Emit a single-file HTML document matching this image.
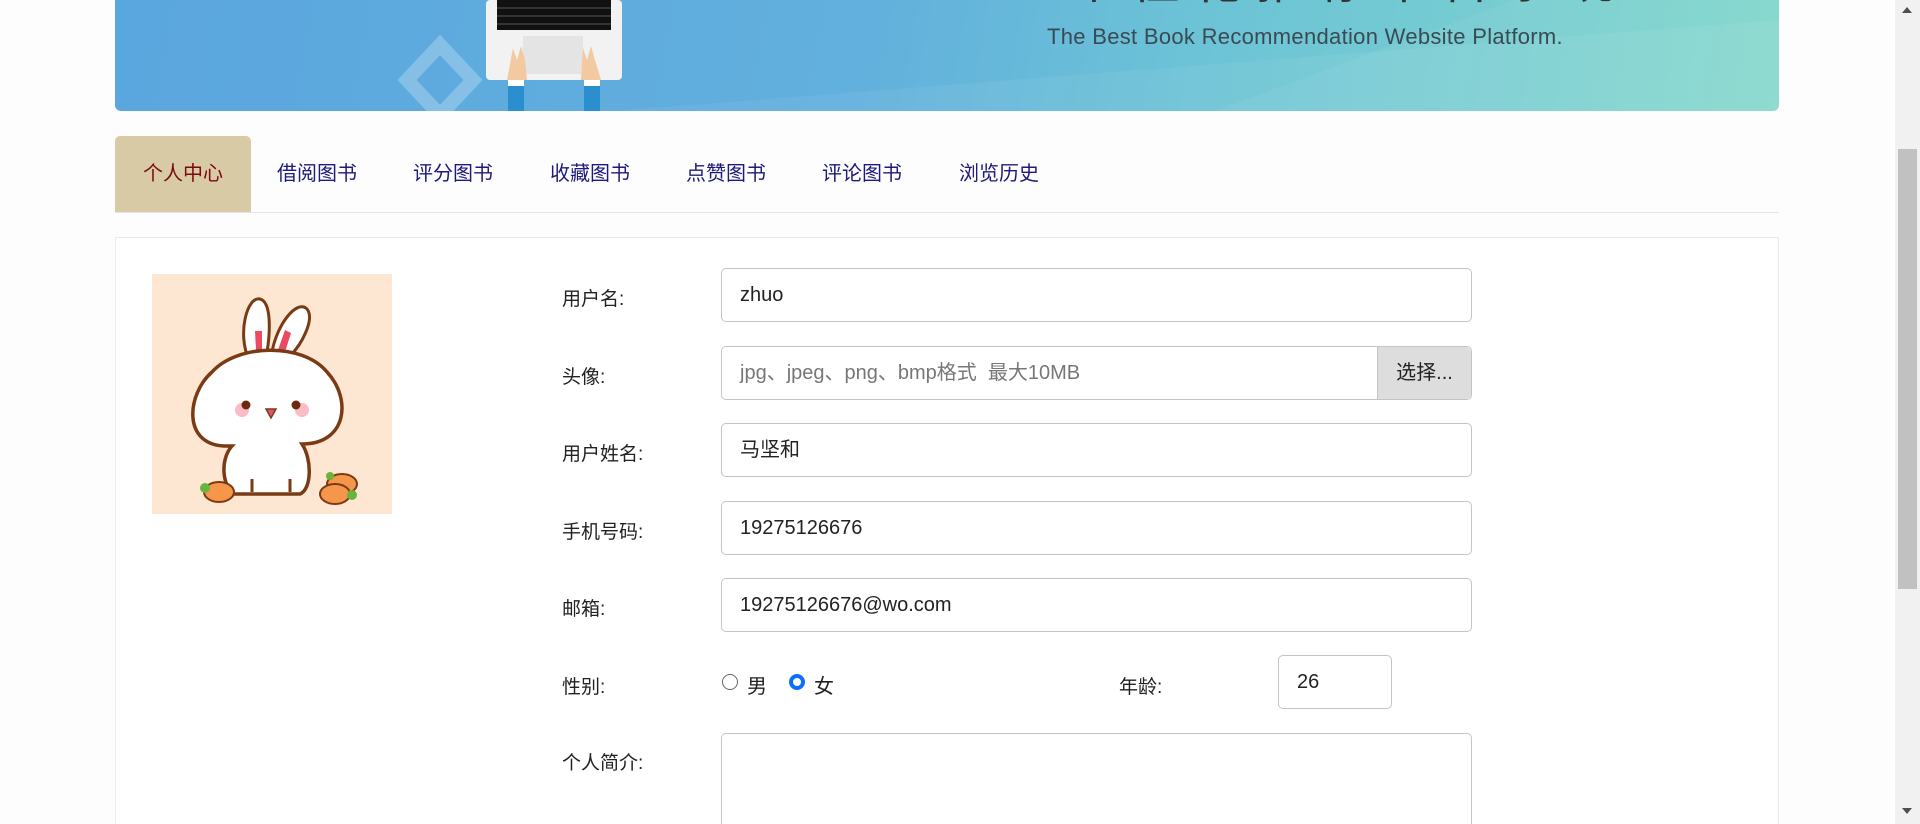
<!DOCTYPE html>
<html style="width:1920px;height:824px;overflow:hidden"><head><meta charset="utf-8"><style>
*{box-sizing:border-box;margin:0;padding:0}
body{width:1920px;height:824px;overflow:hidden;background:#fdfdfe;font-family:"Liberation Sans","Noto Sans CJK SC",sans-serif;position:relative}
.banner{position:absolute;left:115px;top:0;width:1664px;height:111px;border-radius:0 0 6px 6px;background:linear-gradient(100deg,#5aa6de 0%,#62b0dd 45%,#6cc3d6 65%,#82d7cc 100%);overflow:hidden}
.sub{position:absolute;left:932px;top:24px;font-size:22px;color:#3a4a55;font-weight:300;letter-spacing:0.3px}
.ttl{position:absolute;left:955px;top:-58px;font-size:48px;color:#333;letter-spacing:14px;font-family:"Noto Sans CJK SC",sans-serif}
.tabs{position:absolute;left:115px;top:136px;width:1664px;height:77px;border-bottom:1px solid #e6e6e6}
.tab{position:absolute;top:0;height:76px;line-height:76px;font-size:20px;color:#1d1a7a}
.tab.act{background:#d9caa6;color:#7a0a10;border-radius:5px 5px 0 0;left:0;width:136px;text-align:center}
.panel{position:absolute;left:115px;top:237px;width:1664px;height:600px;background:#fff;border:1px solid #eaeaea}
.lab{position:absolute;left:562px;font-size:19px;color:#222}
.inp{position:absolute;left:721px;width:751px;height:54px;border:1px solid #c4c4c4;border-radius:5px;background:#fff;font-size:20px;color:#222;padding-left:18px;line-height:52px}
.btn{position:absolute;right:0;top:0;width:94px;height:52px;background:#ddd;border-left:1px solid #c4c4c4;text-align:center;border-radius:0 5px 5px 0;color:#222}
.radio{position:absolute;width:16px;height:16px;border-radius:50%;border:1px solid #666;background:#fff}
.sb{position:absolute;right:0;top:0;width:25px;height:824px;background:#f1f1f1}
</style></head><body>
<div class="banner">
<svg width="1664" height="111" style="position:absolute;left:0;top:0">
<polygon points="500,111 1664,20 1664,111" fill="#fff" opacity="0.06"/>
<polygon points="1100,111 1400,0 1664,0 1664,111" fill="#fff" opacity="0.05"/>
<polygon points="292,80 325,45 358,80 325,115" fill="none" stroke="#fff" stroke-opacity="0.25" stroke-width="14"/>
<rect x="371" y="0" width="136" height="80" rx="4" fill="#f2f2f2"/>
<rect x="382" y="0" width="114" height="30" fill="#111"/>
<g stroke="#555" stroke-width="1"><line x1="382" y1="8" x2="496" y2="8"/><line x1="382" y1="16" x2="496" y2="16"/><line x1="382" y1="24" x2="496" y2="24"/></g>
<rect x="408" y="36" width="60" height="38" fill="#e4e4e4"/>
<rect x="393" y="84" width="16" height="27" fill="#2b8fcf"/><rect x="469" y="84" width="16" height="27" fill="#2b8fcf"/>
<rect x="393" y="80" width="16" height="6" fill="#fff"/><rect x="469" y="80" width="16" height="6" fill="#fff"/>
<path d="M392 80 L398 48 L402 60 L406 46 L410 60 L412 80Z" fill="#f2c9a0"/>
<path d="M466 80 L468 48 L472 60 L476 46 L480 60 L486 80Z" fill="#f2c9a0"/>
</svg>
<div class="ttl">个性化推荐平台系统</div>
<div class="sub">The Best Book Recommendation Website Platform.</div>
</div>
<div class="tabs">
<div class="tab act">个人中心</div>
<div class="tab" style="left:162px">借阅图书</div>
<div class="tab" style="left:298px">评分图书</div>
<div class="tab" style="left:435px">收藏图书</div>
<div class="tab" style="left:571px">点赞图书</div>
<div class="tab" style="left:707px">评论图书</div>
<div class="tab" style="left:844px">浏览历史</div>
</div>
<div class="panel"></div>
<svg style="position:absolute;left:152px;top:274px" width="240" height="240" viewBox="0 0 240 240">
<rect width="240" height="240" fill="#fde7d2"/>
<path d="M97 86 C85 60 95 22 108 25 C120 28 118 60 115 78Z" fill="#fff" stroke="#7a3a14" stroke-width="3"/>
<path d="M120 78 C125 50 145 25 155 35 C163 45 150 70 138 82Z" fill="#fff" stroke="#7a3a14" stroke-width="3"/>
<path d="M104 76 L103 57 L110 57 L110 76Z M126 76 L133 56 L139 59 L133 78Z" fill="#ea4b62"/>
<path d="M72 172 C30 170 35 120 60 98 C85 70 150 68 175 98 C200 125 195 170 150 170 C160 185 160 215 148 220 L82 220 C70 212 68 185 80 172Z" fill="#fff" stroke="#7a3a14" stroke-width="3.5"/>
<circle cx="90" cy="136" r="7" fill="#fbbcc6"/><circle cx="150" cy="136" r="7" fill="#fbbcc6"/>
<circle cx="94" cy="131" r="4.5" fill="#6b2a10"/><circle cx="144" cy="131" r="4.5" fill="#6b2a10"/>
<path d="M114 135 L124 135 L119 144Z" fill="#e4536a" stroke="#7a3a14" stroke-width="1.5"/>
<path d="M100 205 L100 218 M138 205 L138 218" stroke="#7a3a14" stroke-width="3"/>
<ellipse cx="67" cy="218" rx="15" ry="10" fill="#f5964a" stroke="#7a3a14" stroke-width="2"/>
<circle cx="53" cy="214" r="5" fill="#69b43c"/>
<ellipse cx="190" cy="210" rx="15" ry="10" fill="#f5964a" stroke="#7a3a14" stroke-width="2"/>
<ellipse cx="183" cy="220" rx="15" ry="10" fill="#f5964a" stroke="#7a3a14" stroke-width="2"/>
<circle cx="200" cy="221" r="5" fill="#69b43c"/><circle cx="178" cy="202" r="4" fill="#69b43c"/>
</svg>
<div class="lab" style="top:284px">用户名:</div>
<div class="inp" style="top:268px">zhuo</div>
<div class="lab" style="top:362px">头像:</div>
<div class="inp" style="top:346px;color:#777">jpg、jpeg、png、bmp格式 &nbsp;最大10MB<div class="btn">选择...</div></div>
<div class="lab" style="top:439px">用户姓名:</div>
<div class="inp" style="top:423px">马坚和</div>
<div class="lab" style="top:517px">手机号码:</div>
<div class="inp" style="top:501px">19275126676</div>
<div class="lab" style="top:594px">邮箱:</div>
<div class="inp" style="top:578px">19275126676@wo.com</div>
<div class="lab" style="top:672px">性别:</div>
<div class="radio" style="left:722px;top:674px"></div>
<div class="lab" style="left:747px;top:670px;font-size:20px">男</div>
<div class="radio" style="left:789px;top:674px;border:4px solid #0d6efd"></div>
<div class="lab" style="left:814px;top:670px;font-size:20px">女</div>
<div class="lab" style="left:1119px;top:672px">年龄:</div>
<div class="inp" style="left:1278px;top:655px;width:114px">26</div>
<div class="lab" style="top:748px">个人简介:</div>
<div class="inp" style="top:733px;height:120px"></div>
<div class="sb"><div style="position:absolute;left:3px;top:149px;width:19px;height:440px;background:#c1c1c1"></div>
<div style="position:absolute;left:7px;top:7px;border:5px solid transparent;border-bottom:6px solid #505050;border-top:0"></div>
<div style="position:absolute;left:7px;top:808px;border:5px solid transparent;border-top:6px solid #505050;border-bottom:0"></div></div>
</body></html>
